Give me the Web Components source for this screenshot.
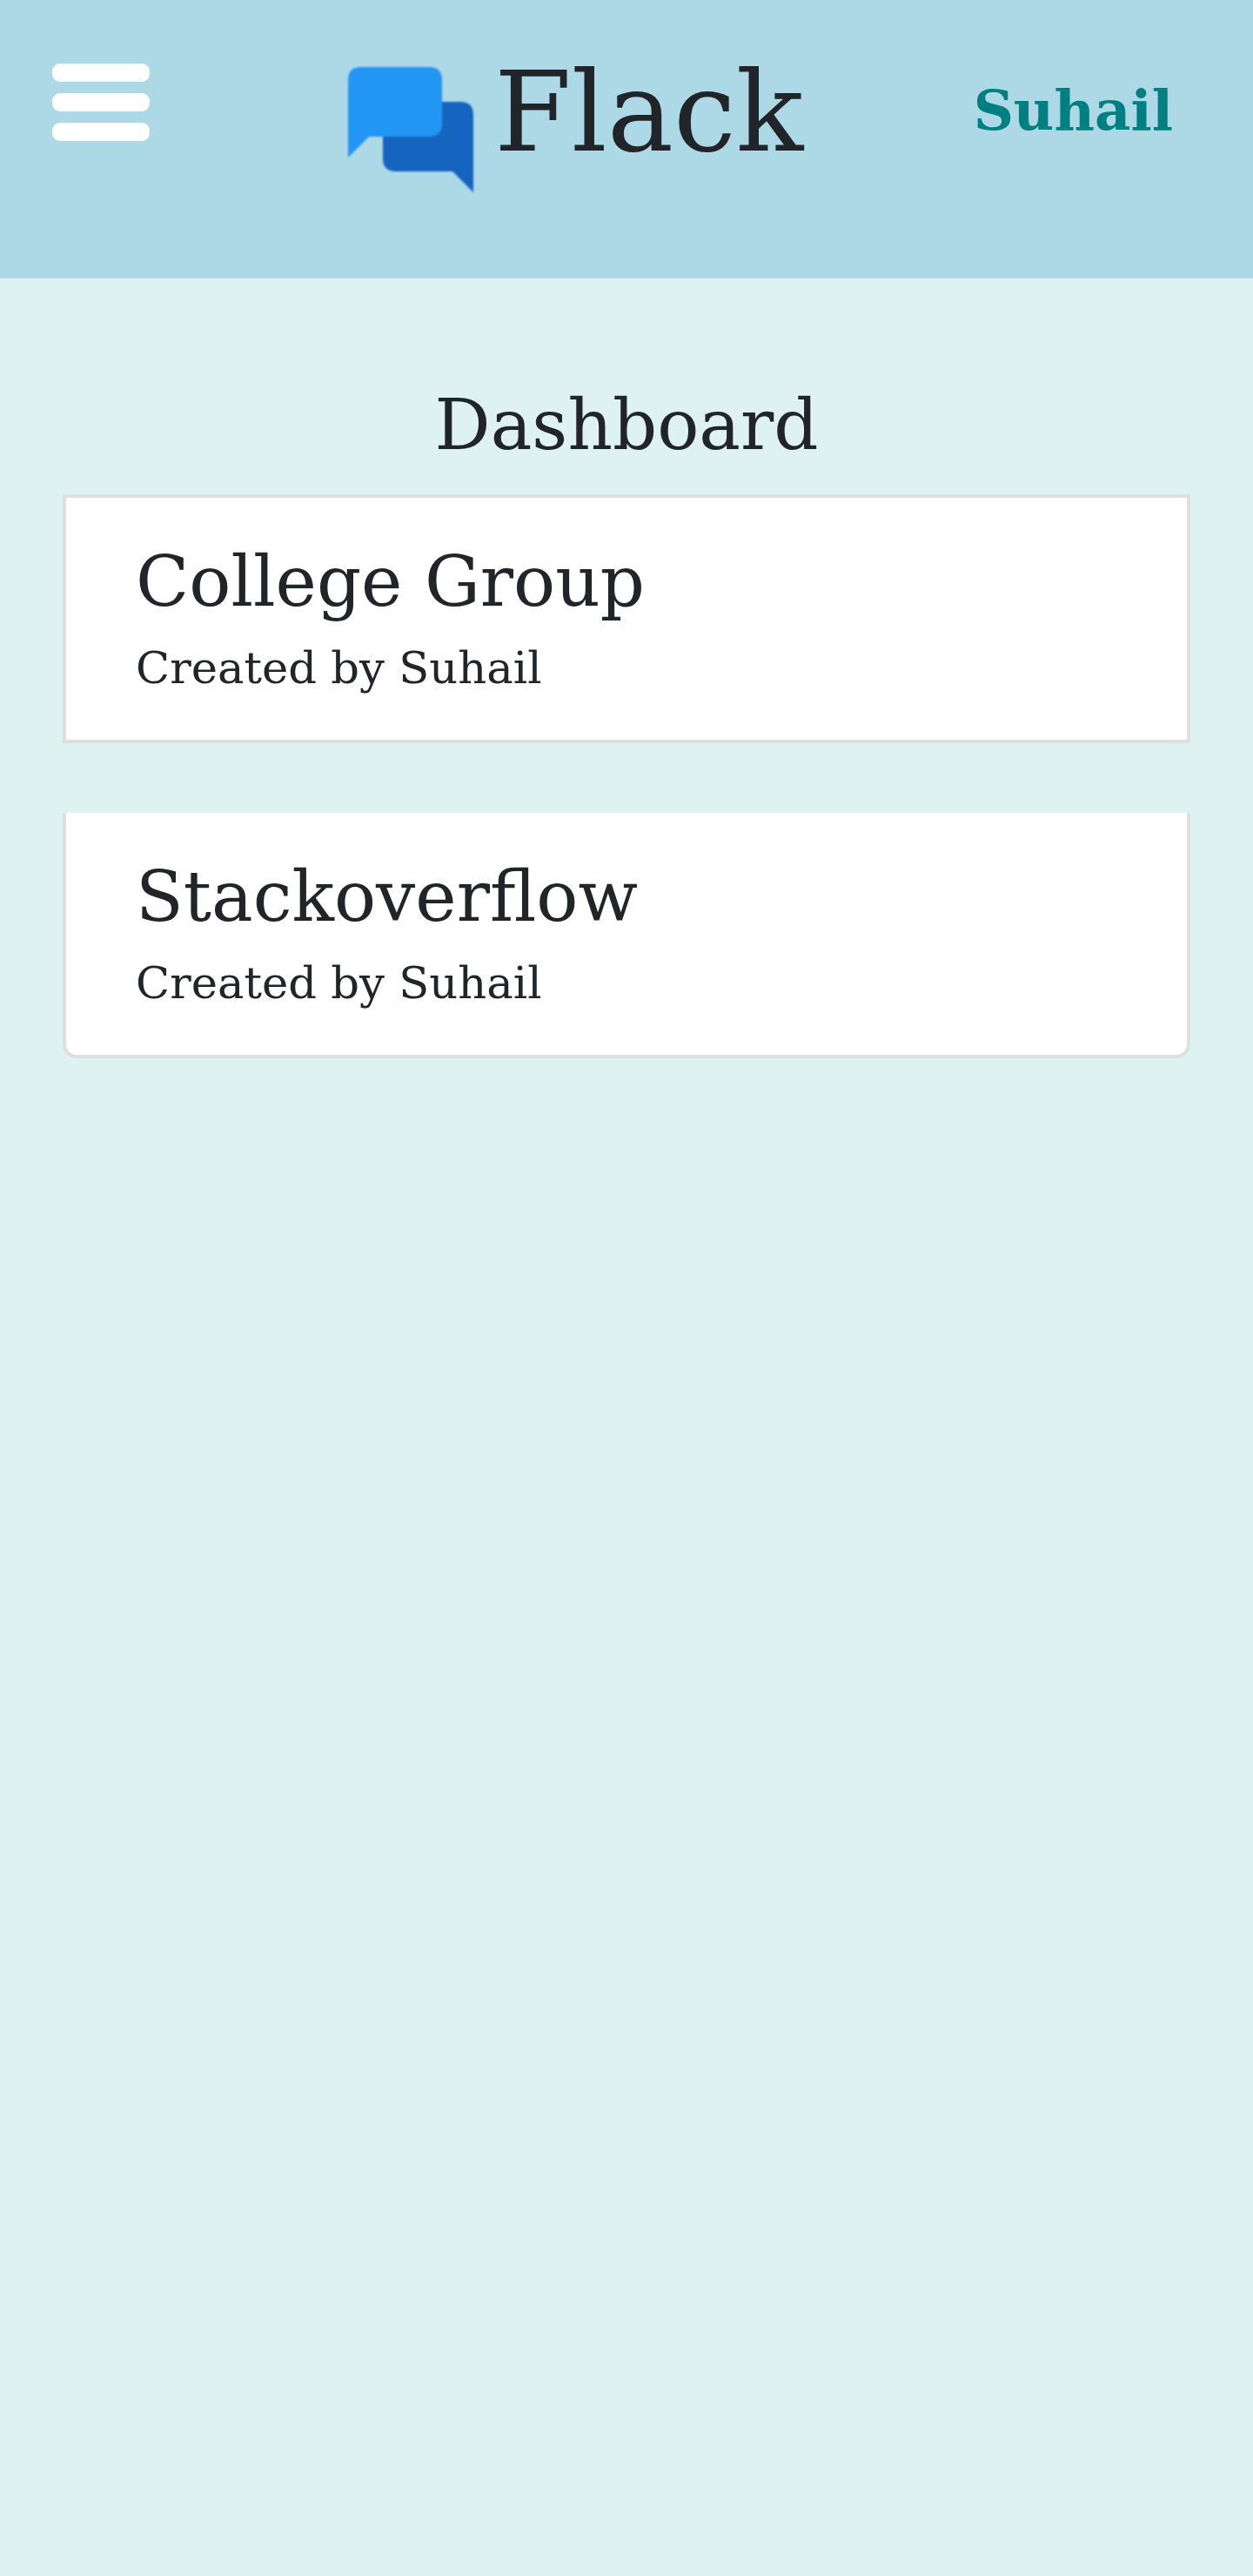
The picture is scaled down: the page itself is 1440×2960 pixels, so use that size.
<!DOCTYPE html>
<html lang="en">
<head>
<meta charset="utf-8">
<title>Flack</title>
<style>
html, body { margin: 0; background: #def2f1; }
body { font-family: "DejaVu Serif", serif; color: #212529; }
</style>
</head>
<body>
<flack-app></flack-app>
<script>
const define = (name, html) => {
  const template = document.createElement('template');
  template.innerHTML = html;
  customElements.define(name, class extends HTMLElement {
    constructor() {
      super();
      this.attachShadow({ mode: 'open' }).append(template.content.cloneNode(true));
    }
  });
};

define('menu-button', `
<style>
:host { display: flex; flex-direction: column; gap: 13.2px; width: 112px; }
i { height: 20.8px; border-radius: 9px; background: #fff; }
</style><i></i><i></i><i></i>`);

define('chat-logo', `
<style>
:host { display: block; width: 152px; height: 152px; }
svg { display: block; filter: blur(.9px); }
</style>
<svg width="152" height="152" viewBox="0 0 152 152">
<path fill="#1565c0" d="M133 44H59q-15 0-15 15v50q0 15 15 15h65l24 24V59q0-15-15-15z"/>
<path fill="#2196f3" d="M19 4h78q15 0 15 15v50q0 15-15 15H28L4 108V19Q4 4 19 4z"/>
</svg>`);

define('app-header', `
<style>
:host { display: flex; align-items: flex-start; box-sizing: border-box; height: 320px; padding: 0 92px 0 60px; background: #add8e6; }
menu-button { margin-top: 73px; }
chat-logo { margin: 73px 0 0 224px; }
h1 { margin: 51px 0 0 20px; font-size: 128px; line-height: 155px; font-weight: 400; }
.user { margin: 79px 0 0 auto; font-size: 64px; line-height: 96px; font-weight: 700; color: #008080; }
</style>
<menu-button></menu-button><chat-logo></chat-logo><h1>Flack</h1><div class="user"><slot></slot></div>`);

define('channel-card', `
<style>
:host { display: block; padding: 48px 80px; background: #fff; border: 4px solid #dfdfdf; }
:host(:last-of-type) { border-top: 0; border-radius: 0 0 16px 16px; }
h5 { margin: 0 0 15px; font-size: 80px; line-height: 97px; font-weight: 400; }
p { margin: 0; font-size: 51.2px; line-height: 70px; }
</style>
<h5><slot name="title"></slot></h5><p><slot></slot></p>`);

define('dash-board', `
<style>
:host { display: block; padding: 120px 72px 0; }
h5 { margin: 0 0 31px; text-align: center; font-size: 80px; line-height: 97px; font-weight: 400; }
.list { display: flex; flex-direction: column; gap: 80px; }
</style>
<h5>Dashboard</h5><div class="list"><slot></slot></div>`);

define('flack-app', `
<style>:host { display: block; min-height: 2960px; background: #def2f1; }</style>
<app-header>Suhail</app-header>
<dash-board>
<channel-card><span slot="title">College Group</span>Created by Suhail</channel-card>
<channel-card><span slot="title">Stackoverflow</span>Created by Suhail</channel-card>
</dash-board>`);
</script>
</body>
</html>
